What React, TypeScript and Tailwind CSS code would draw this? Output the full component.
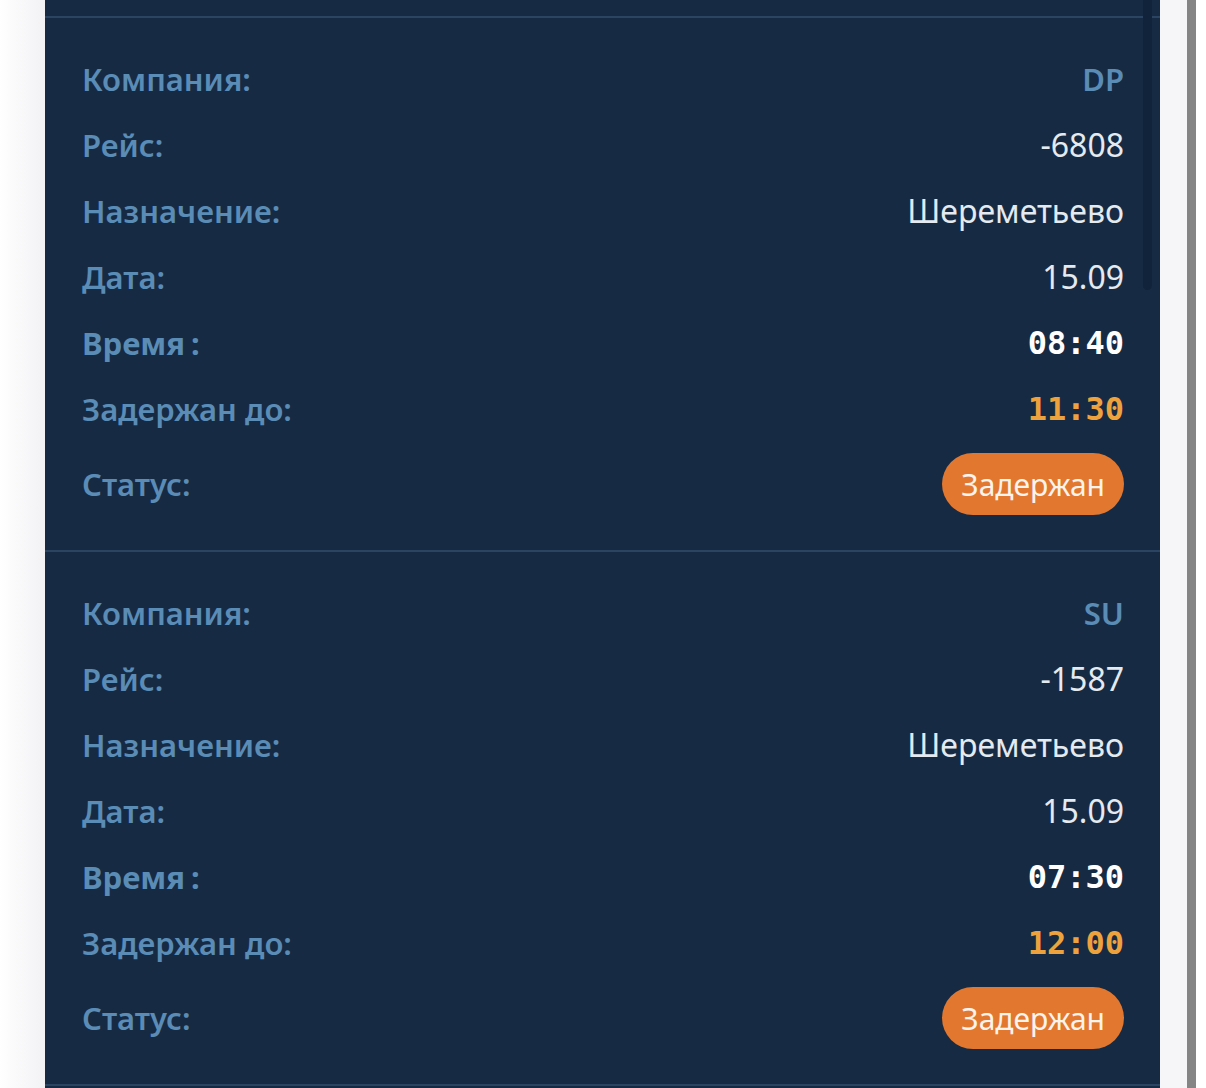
import React from "react";

type Flight = { company: string; flight: string; dest: string; date: string; time: string; delayed: string };

const flights: Flight[] = [
  { company: "DP", flight: "-6808", dest: "Шереметьево", date: "15.09", time: "08:40", delayed: "11:30" },
  { company: "SU", flight: "-1587", dest: "Шереметьево", date: "15.09", time: "07:30", delayed: "12:00" },
];

const sans = { fontFamily: '"Noto Sans", "Open Sans", sans-serif' };
const mono = { fontFamily: '"DejaVu Sans Mono", monospace' };

function Row({ label, children }: { label: React.ReactNode; children: React.ReactNode }) {
  return (
    <div className="flex h-[66px] items-center justify-between">
      <div className="text-[31px] font-semibold text-[#5a8cb6]">{label}</div>
      <div>{children}</div>
    </div>
  );
}

function Card({ f }: { f: Flight }) {
  return (
    <div className="border-b-2 border-[#2a4462] pl-[37px] pr-[36px] pt-[28px] pb-[35px]">
      <Row label="Компания:">
        <span className="text-[31px] font-semibold text-[#5a8cb6]">{f.company}</span>
      </Row>
      <Row label="Рейс:">
        <span className="text-[32px] text-[#e4eaf0]">{f.flight}</span>
      </Row>
      <Row label="Назначение:">
        <span className="text-[32px] text-[#e4eaf0]">{f.dest}</span>
      </Row>
      <Row label="Дата:">
        <span className="text-[32px] text-[#e4eaf0]">{f.date}</span>
      </Row>
      <Row
        label={
          <span className="font-bold">
            Время<span className="ml-[6px]">:</span>
          </span>
        }
      >
        <span className="text-[32px] font-bold text-white" style={mono}>
          {f.time}
        </span>
      </Row>
      <Row label="Задержан до:">
        <span className="text-[32px] font-bold text-[#eda23e]" style={mono}>
          {f.delayed}
        </span>
      </Row>
      <div className="mt-[11px] flex h-[62px] items-center justify-between">
        <div className="text-[31px] font-semibold text-[#5a8cb6]">Статус:</div>
        <div className="flex h-[62px] items-center rounded-full bg-[#e2782f] px-[19px] text-[30px] text-[#fbf3ec]">
          Задержан
        </div>
      </div>
    </div>
  );
}

export default function App() {
  return (
    <div className="flex h-[1088px] w-[1206px] overflow-hidden bg-white" style={sans}>
      <div className="w-[45px] bg-gradient-to-r from-white to-[#f2f1f4]" />
      <div className="relative w-[1115px] bg-[#162a44]">
        <div className="h-[18px] border-b-2 border-[#2a4462]" />
        {flights.map((f) => (
          <Card key={f.company} f={f} />
        ))}
        <div className="absolute right-[8px] top-0 h-[290px] w-[9px] rounded-b-full bg-[#11233a]" />
      </div>
      <div className="w-[27px] bg-[#f6f6f8]" />
      <div className="w-[9px] bg-[#858585]" />
      <div className="flex-1 bg-white" />
    </div>
  );
}
